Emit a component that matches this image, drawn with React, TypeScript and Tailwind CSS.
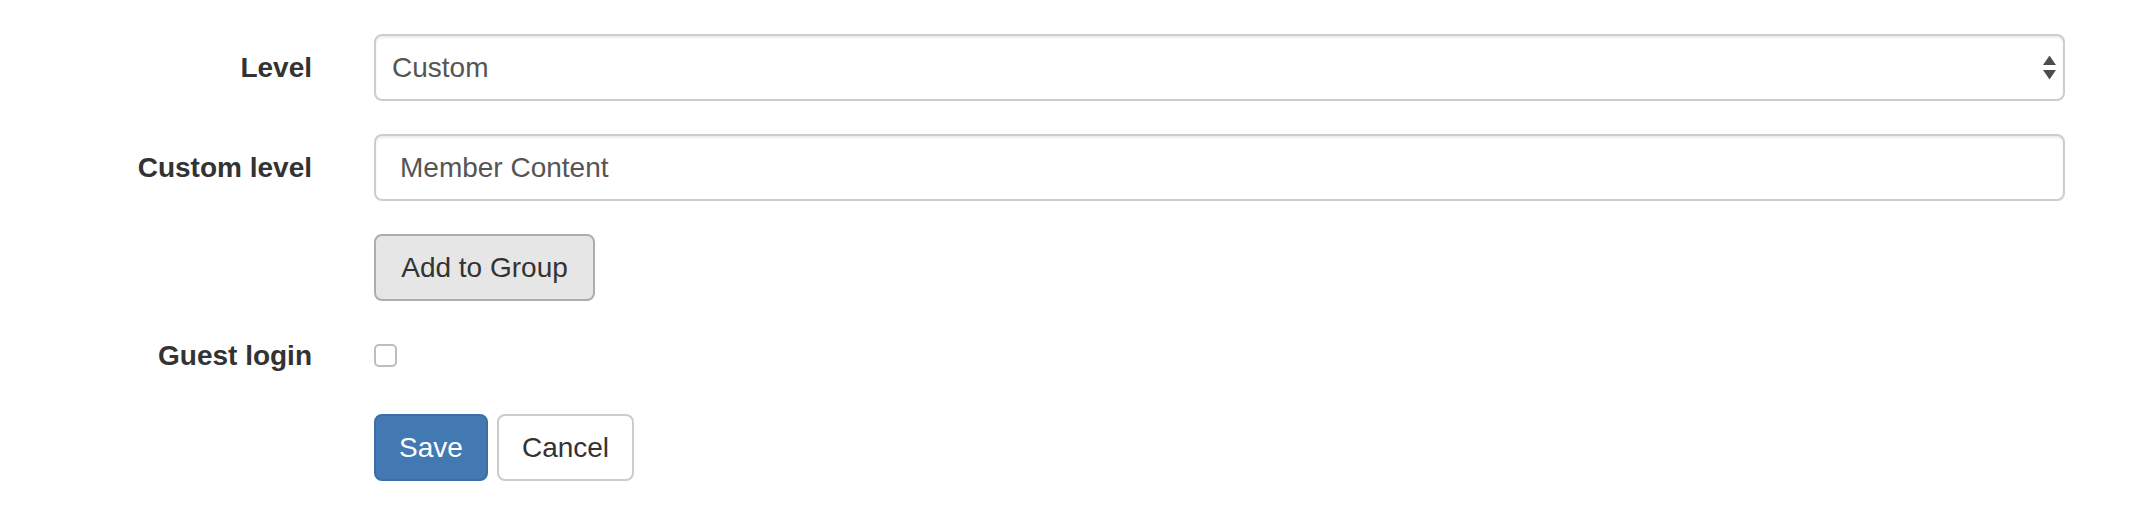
import React, { useState } from "react";

const labelCls =
  "w-[312px] shrink-0 text-right text-[28px] font-bold text-[#333]";

const App: React.FC = () => {
  const [level, setLevel] = useState("Custom");
  const [customLevel, setCustomLevel] = useState("Member Content");
  const [guest, setGuest] = useState(false);

  return (
    <div className="min-h-[518px] w-full bg-white pt-[34px] pr-[65px] font-['Liberation_Sans',Arial,sans-serif]">
      <form className="flex flex-col">
        {/* Level */}
        <div className="flex h-[67px] items-center gap-[62px]">
          <label className={labelCls}>Level</label>
          <div className="relative h-full flex-1">
            <select
              value={level}
              onChange={(e) => setLevel(e.target.value)}
              className="h-full w-full appearance-none rounded-[8px] border-2 border-[#cdcdcd] bg-white pl-[16px] text-[28px] text-[#555] shadow-[inset_0_2px_2px_rgba(0,0,0,0.075)] outline-none"
            >
              <option>Custom</option>
              <option>Member</option>
              <option>Admin</option>
            </select>
            <svg
              className="pointer-events-none absolute right-[9px] top-1/2 -translate-y-1/2"
              width="13"
              height="25"
              viewBox="0 0 13 25"
            >
              <path d="M6.5 0 L13 9.5 H0 Z" fill="#4d4d4d" />
              <path d="M0 14.5 H13 L6.5 24 Z" fill="#4d4d4d" />
            </svg>
          </div>
        </div>

        {/* Custom level */}
        <div className="mt-[33px] flex h-[67px] items-center gap-[62px]">
          <label className={labelCls}>Custom level</label>
          <input
            type="text"
            value={customLevel}
            onChange={(e) => setCustomLevel(e.target.value)}
            className="h-full flex-1 rounded-[8px] border-2 border-[#cdcdcd] bg-white px-[24px] text-[28px] text-[#555] shadow-[inset_0_2px_2px_rgba(0,0,0,0.075)] outline-none"
          />
        </div>

        {/* Add to group */}
        <div className="mt-[33px] flex h-[67px] items-center gap-[62px]">
          <div className="w-[312px] shrink-0" />
          <button
            type="button"
            className="h-full w-[221px] rounded-[8px] border-2 border-[#adadad] bg-[#e6e6e6] text-center text-[28px] text-[#333]"
          >
            Add to Group
          </button>
        </div>

        {/* Guest login */}
        <div className="mt-[33px] flex h-[43px] items-center gap-[62px]">
          <label className={labelCls}>Guest login</label>
          <button
            type="button"
            onClick={() => setGuest(!guest)}
            className="h-[23px] w-[23px] rounded-[5px] border-2 border-[#bdbdbd] bg-white"
          >
            {guest && (
              <svg viewBox="0 0 20 20" className="h-full w-full">
                <path d="M4 10 L8 14 L16 5" stroke="#333" strokeWidth="2.5" fill="none" />
              </svg>
            )}
          </button>
        </div>

        {/* Actions */}
        <div className="mt-[37px] flex h-[67px] items-center gap-[62px]">
          <div className="w-[312px] shrink-0" />
          <div className="flex h-full gap-[9px]">
            <button
              type="button"
              className="h-full w-[114px] rounded-[8px] border-2 border-[#3a6ea5] bg-[#4279b2] text-center text-[28px] text-white"
            >
              Save
            </button>
            <button
              type="button"
              className="h-full w-[137px] rounded-[8px] border-2 border-[#cccccc] bg-white text-center text-[28px] text-[#333]"
            >
              Cancel
            </button>
          </div>
        </div>
      </form>
    </div>
  );
};

export default App;
